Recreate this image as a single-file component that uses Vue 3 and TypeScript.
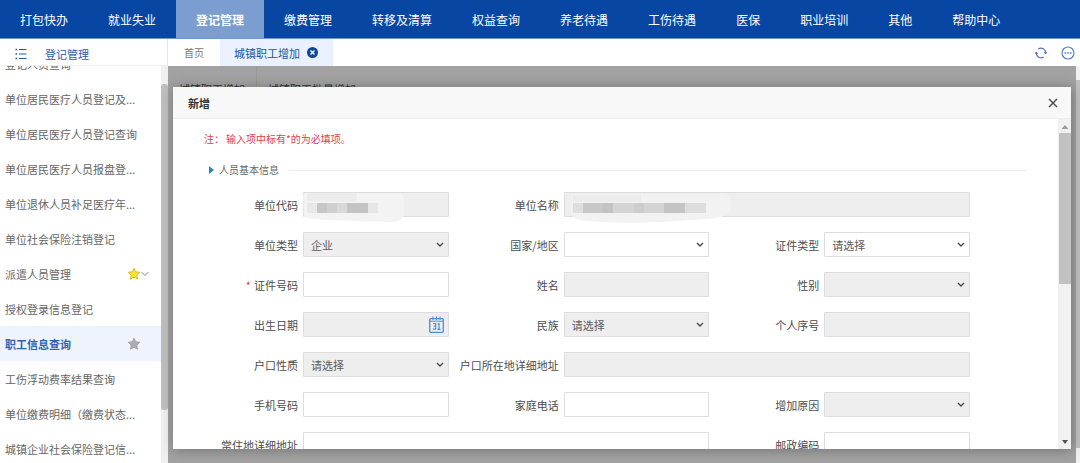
<script setup lang="ts">
import { ref } from 'vue'

interface Field {
  id: string
  label: string
  kind: 'text' | 'select' | 'date'
  value?: string
  disabled?: boolean
  required?: boolean
  wide?: boolean
  mask?: 'code' | 'name'
}

interface MenuItem {
  label: string
  star?: 'gold' | 'grey'
  expandable?: boolean
}

const navItems = ['打包快办', '就业失业', '登记管理', '缴费管理', '转移及清算', '权益查询', '养老待遇', '工伤待遇', '医保', '职业培训', '其他', '帮助中心']
const activeNav = ref('登记管理')

const menuItems: MenuItem[] = [
  { label: '登记人员查询' },
  { label: '单位居民医疗人员登记及...' },
  { label: '单位居民医疗人员登记查询' },
  { label: '单位居民医疗人员报盘登...' },
  { label: '单位退休人员补足医疗年...' },
  { label: '单位社会保险注销登记' },
  { label: '派遣人员管理', star: 'gold', expandable: true },
  { label: '授权登录信息登记' },
  { label: '职工信息查询', star: 'grey' },
  { label: '工伤浮动费率结果查询' },
  { label: '单位缴费明细（缴费状态...' },
  { label: '城镇企业社会保险登记信...' },
]
const activeMenu = ref('职工信息查询')

const fields: Field[] = [
  { id: 'unit-code', label: '单位代码', kind: 'text', disabled: true, mask: 'code' },
  { id: 'unit-name', label: '单位名称', kind: 'text', disabled: true, wide: true, mask: 'name' },
  { id: 'unit-type', label: '单位类型', kind: 'select', value: '企业', disabled: true },
  { id: 'country', label: '国家/地区', kind: 'select' },
  { id: 'id-type', label: '证件类型', kind: 'select', value: '请选择' },
  { id: 'id-number', label: '证件号码', kind: 'text', required: true },
  { id: 'full-name', label: '姓名', kind: 'text', disabled: true },
  { id: 'gender', label: '性别', kind: 'select', disabled: true },
  { id: 'birth-date', label: '出生日期', kind: 'date', disabled: true },
  { id: 'ethnicity', label: '民族', kind: 'select', value: '请选择', disabled: true },
  { id: 'person-no', label: '个人序号', kind: 'text', disabled: true },
  { id: 'household', label: '户口性质', kind: 'select', value: '请选择', disabled: true },
  { id: 'household-address', label: '户口所在地详细地址', kind: 'text', disabled: true, wide: true },
  { id: 'mobile', label: '手机号码', kind: 'text' },
  { id: 'home-phone', label: '家庭电话', kind: 'text' },
  { id: 'reason', label: '增加原因', kind: 'select', disabled: true },
  { id: 'home-address', label: '常住地详细地址', kind: 'text', wide: true },
  { id: 'postcode', label: '邮政编码', kind: 'text' },
]
</script>

<template>
  <div class="page">
    <nav class="topnav">
      <a
        v-for="item in navItems"
        :key="item"
        href="#"
        :class="{ active: item === activeNav }"
        @click.prevent="activeNav = item"
      >{{ item }}</a>
    </nav>

    <div class="shell">
      <aside class="sidebar">
        <header class="side-head">
          <svg width="12" height="12" viewBox="0 0 12 12" fill="none" stroke="#2b549f">
            <path d="M4 1.5h7.5M4 6h7.5M4 10.5h7.5" />
            <path d="M0.5 1.5h1.5M0.5 6h1.5M0.5 10.5h1.5" stroke-width="1.5" />
          </svg>
          <span>登记管理</span>
        </header>
        <div class="side-body">
          <ul class="menu">
            <li v-for="item in menuItems" :key="item.label" :class="{ active: item.label === activeMenu }">
              <a href="#" @click.prevent="activeMenu = item.label">{{ item.label }}</a>
              <svg v-if="item.star" :class="['star', item.star]" width="14" height="14" viewBox="0 0 14 14">
                <path d="M7 1.2l1.7 3.6 4 .5-2.9 2.8.7 4L7 10.2l-3.5 1.9.7-4L1.300 5.300l4-.5z" stroke-linejoin="round" />
              </svg>
              <svg v-if="item.expandable" class="more" width="8" height="6" viewBox="0 0 8 6" fill="none" stroke="#888">
                <path d="M0.500 1l3.500 3.500L7.500 1" />
              </svg>
            </li>
          </ul>
          <div class="side-track"><div class="side-thumb"></div></div>
        </div>
      </aside>

      <main class="content">
        <div class="tabs">
          <a class="tab home" href="#">首页</a>
          <a class="tab current" href="#">
            城镇职工增加
            <svg width="11" height="11" viewBox="0 0 11 11">
              <circle cx="5.500" cy="5.500" r="5.500" fill="#0d4798" />
              <path d="M3.500 3.500l4 4M7.500 3.500l-4 4" stroke="#fff" stroke-width="1.400" />
            </svg>
          </a>
          <div class="tools">
            <button type="button" aria-label="刷新">
              <svg width="12" height="12" viewBox="0 0 12 12" fill="none" stroke="#5470b8" stroke-width="1.200">
                <path d="M3.300 2A4.700 4.700 0 0 1 10.700 6.200M8.700 10A4.700 4.700 0 0 1 1.300 5.800" />
                <path d="M9.200 5.200l1.500 1.800 1.100-1.800M0.200 6.800l1.100-1.800 1.500 1.800" stroke-width="1" />
              </svg>
            </button>
            <button type="button" aria-label="更多">
              <svg width="14" height="14" viewBox="0 0 14 14" fill="none" stroke="#4c82d0" stroke-width="1.200">
                <circle cx="7" cy="7" r="6" />
                <path d="M3.500 7h1.700M6.200 7h1.700M8.900 7h1.700" stroke-width="1.500" />
              </svg>
            </button>
          </div>
        </div>

        <div class="stage">
          <div class="backdrop">
            <div class="under-tabs"><span>城镇职工增加</span><span>城镇职工批量增加</span></div>
          </div>
          <div class="outer-track"><div class="outer-thumb"></div></div>

          <section class="dialog" role="dialog" aria-labelledby="dialog-title">
            <header class="dialog-head">
              <h2 id="dialog-title">新增</h2>
              <button type="button" aria-label="关闭">
                <svg width="10" height="10" viewBox="0 0 10 10" stroke="#505050" stroke-width="1.500">
                  <path d="M1 1l8 8M9 1l-8 8" />
                </svg>
              </button>
            </header>
            <div class="dialog-body">
              <form class="form" @submit.prevent>
                <p class="note"><span>注：</span><span>输入项中标有*的为必填项。</span></p>
                <h3 class="section-title">
                  <svg width="5" height="8" viewBox="0 0 5 8" fill="#2584c8"><path d="M0 0l5 4-5 4z" /></svg>
                  <span>人员基本信息</span>
                </h3>
                <div class="grid">
                  <div v-for="f in fields" :key="f.id" :class="['field', { wide: f.wide }]">
                    <label :for="f.id"><b v-if="f.required">*</b>{{ f.label }}</label>
                    <div class="control">
                      <template v-if="f.kind === 'select'">
                        <select :id="f.id" :disabled="f.disabled">
                          <option>{{ f.value ?? '' }}</option>
                        </select>
                        <svg class="chevron" width="8" height="6" viewBox="0 0 8 6" fill="none" stroke="#4a4a4a" stroke-width="1.400">
                          <path d="M1 1l3 3 3-3" />
                        </svg>
                      </template>
                      <input v-else :id="f.id" type="text" :disabled="f.disabled" />
                      <svg v-if="f.kind === 'date'" class="calendar" width="15" height="17" viewBox="0 0 15 17" fill="none" stroke="#4a90d9">
                        <rect x="0.700" y="2.700" width="13.600" height="13.600" rx="1" stroke-width="1.300" />
                        <path d="M1 5.200h13M4 0.500v3.500M7.500 0.500v3.500M11 0.500v3.500" />
                        <path d="M4 7.500h2.700v2.700H4.700M6.700 10.200v3H3.800M8.700 8.300l1.300-.8v6M8.500 13.300h3" stroke-width="1.200" />
                      </svg>
                      <svg v-if="f.mask === 'code'" class="mask" width="104" height="32" viewBox="0 0 104 32">
                        <path d="M0 3Q2 0 8 1L98 1Q103 8 100 25Q98 30 86 30L28 28Q5 27 1 25Z" fill="#f3f3f3" />
                        <rect x="4" y="1" width="50" height="8" fill="#ececec" />
                        <rect x="4" y="11" width="10" height="10" fill="#e8e8e8" />
                        <rect x="14" y="11" width="51" height="10" fill="#cfcfcf" />
                        <rect x="14" y="11" width="10" height="10" fill="#c6c6c6" />
                        <rect x="34" y="11" width="10" height="10" fill="#d9d9d9" />
                        <rect x="44" y="11" width="21" height="10" fill="#c4c4c4" />
                        <rect x="65" y="11" width="10" height="10" fill="#e6e6e6" />
                      </svg>
                      <svg v-if="f.mask === 'name'" class="mask" width="168" height="32" viewBox="0 0 168 32">
                        <path d="M8 2L162 2Q170 10 164 22Q158 27 125 28Q70 33 22 29Q10 28 7 22Z" fill="#f2f2f2" />
                        <rect x="9" y="3" width="68" height="7" fill="#ececec" />
                        <rect x="9" y="11" width="133" height="10" fill="#d4d4d4" />
                        <rect x="9" y="11" width="10" height="10" fill="#dedede" />
                        <rect x="19" y="11" width="20" height="10" fill="#c8c8c8" />
                        <rect x="39" y="11" width="10" height="10" fill="#c3c3c3" />
                        <rect x="70" y="11" width="10" height="10" fill="#cdcdcd" />
                        <rect x="100" y="11" width="21" height="10" fill="#c5c5c5" />
                        <rect x="121" y="11" width="21" height="10" fill="#dddddd" />
                      </svg>
                    </div>
                  </div>
                </div>
              </form>
              <div class="dialog-track">
                <svg width="8" height="5" viewBox="0 0 8 5" fill="#9a9a9a"><path d="M0.500 5L4 1l3.500 4z" /></svg>
                <div class="dialog-thumb"></div>
                <svg width="8" height="5" viewBox="0 0 8 5" fill="#505050"><path d="M1 0h6L4 4z" /></svg>
              </div>
            </div>
          </section>
        </div>
      </main>
    </div>
  </div>
</template>

<style>
body {
  margin: 0;
  overflow: hidden;
}
</style>

<style scoped>
.page {
  display: flex;
  flex-direction: column;
  height: 100vh;
  overflow: hidden;
  background: #fff;
  color: #666;
  font-family: "Noto Sans CJK SC", sans-serif;
  font-size: 11px;
}
a {
  color: inherit;
  text-decoration: none;
}
button {
  display: flex;
  padding: 0;
  border: 0;
  background: none;
}
.topnav {
  display: flex;
  flex: none;
  height: 38px;
  border-bottom: 1px solid #6f97cf;
  background: #0747a3;
  color: #fff;
  font-size: 12px;
  line-height: 40px;
}
.topnav a {
  padding: 0 20px;
  white-space: nowrap;
}
.topnav a.active {
  background: #7b9dd0;
  font-weight: 700;
}
.shell {
  display: flex;
  flex: 1;
  min-height: 0;
}
.sidebar {
  display: flex;
  flex: none;
  flex-direction: column;
  width: 168px;
}
.side-head {
  display: flex;
  flex: none;
  align-items: center;
  gap: 18px;
  box-sizing: border-box;
  height: 27px;
  padding: 4px 0 0 15px;
  border-right: 1px solid #e4e8ee;
  border-bottom: 1px solid #eee;
  color: #2b5ba8;
}
.side-body {
  display: flex;
  flex: 1;
  min-height: 0;
  overflow: hidden;
}
.menu {
  flex: 1;
  min-width: 0;
  margin: -20px 0 0;
  padding: 0;
  list-style: none;
}
.menu li {
  display: flex;
  align-items: center;
  box-sizing: border-box;
  height: 35px;
  padding: 0 12px 0 5px;
  line-height: 16px;
  white-space: nowrap;
}
.menu a {
  flex: 0 0 122px;
}
.menu li.active {
  background: #eef3fd;
  color: #2f62b5;
  font-weight: 700;
}
.star.gold {
  fill: #f7e436;
  stroke: #dcbb27;
}
.star.grey {
  fill: #aaadb3;
  stroke: #a0a3a9;
}
.side-track {
  flex: none;
  width: 7px;
  padding-top: 18px;
  background: #f0f0f0;
}
.side-thumb {
  height: 86%;
  border-radius: 3px;
  background: #bfbfbf;
}
.content {
  display: flex;
  flex: 1;
  flex-direction: column;
  min-width: 0;
}
.tabs {
  display: flex;
  flex: none;
  height: 27px;
  line-height: 26px;
}
.tab {
  display: flex;
  align-items: center;
}
.home {
  padding: 0 16px;
  color: #777;
  font-size: 10px;
}
.current {
  gap: 7px;
  padding: 0 15px 0 14px;
  background: #eaf0fd;
  color: #23529f;
}
.tools {
  display: flex;
  align-items: center;
  gap: 14px;
  margin-left: auto;
  padding-right: 5px;
}
.stage {
  position: relative;
  display: flex;
  flex: 1;
  min-height: 0;
}
.backdrop {
  flex: 1;
  overflow: hidden;
  background: #a2a2a2;
}
.under-tabs {
  display: flex;
  height: 46px;
  color: #333;
  line-height: 46px;
}
.under-tabs span {
  padding: 0 11px;
}
.under-tabs span:first-child {
  border-right: 1px solid #989898;
}
.outer-track {
  flex: none;
  width: 4px;
  box-sizing: border-box;
  padding: 14px 0 15px;
  background: #f1f1f1;
}
.outer-thumb {
  height: 100%;
  background: #c1c1c1;
}
.dialog {
  position: absolute;
  inset: 21px 9px 14px 5px;
  display: flex;
  flex-direction: column;
  background: #fff;
  box-shadow: 1px 1px 12px rgba(0, 0, 0, 0.3);
}
.dialog-head {
  display: flex;
  flex: none;
  align-items: center;
  justify-content: space-between;
  height: 31px;
  padding: 0 13px 0 15px;
  border-bottom: 1px solid #eee;
  background: #f8f8f8;
}
.dialog-head h2 {
  margin: 0;
  color: #333;
  font-size: 11px;
  font-weight: 700;
}
.dialog-body {
  display: flex;
  flex: 1;
  min-height: 0;
  overflow: hidden;
}
.form {
  flex: 1;
  min-width: 0;
  padding: 12px 88px 0 15px;
}
.note {
  display: flex;
  gap: 2px;
  margin: 0 0 0 16px;
  color: #d9434e;
  font-size: 10px;
  line-height: 16px;
}
.section-title {
  display: flex;
  align-items: center;
  gap: 5px;
  margin: 15px -57px 14px 21px;
  color: #666;
  font-size: 10px;
  font-weight: 400;
  line-height: 16px;
}
.section-title::after {
  flex: 1;
  height: 1px;
  margin-left: 5px;
  background: #eee;
  content: "";
}
.grid {
  display: grid;
  grid-template-columns: repeat(3, minmax(0, 1fr));
  row-gap: 15px;
}
.field {
  display: flex;
  align-items: center;
  gap: 5px;
  min-width: 0;
}
.field.wide {
  grid-column: span 2;
}
.field label {
  flex: 0 0 110px;
  color: #4c4c4c;
  line-height: 24px;
  text-align: right;
  white-space: nowrap;
}
.field label b {
  margin-right: 3px;
  color: #d9434e;
  font-weight: 400;
}
.control {
  position: relative;
  flex: 1;
  min-width: 0;
}
.control input,
.control select {
  display: block;
  box-sizing: border-box;
  width: 100%;
  height: 25px;
  margin: 0;
  padding: 0 7px;
  border: 1px solid #dcdcdc;
  border-radius: 1px;
  appearance: none;
  background: #fff;
  color: #5c5c5c;
  font: inherit;
  opacity: 1;
}
.control input:disabled,
.control select:disabled {
  background: #eee;
}
.chevron {
  position: absolute;
  top: 10px;
  right: 5px;
  pointer-events: none;
}
.calendar {
  position: absolute;
  top: 4px;
  right: 5px;
}
.mask {
  position: absolute;
  top: 0;
  left: 0;
}
.dialog-track {
  display: flex;
  flex: none;
  flex-direction: column;
  align-items: center;
  width: 13px;
  padding: 5px 0 4px;
  background: #f1f1f1;
}
.dialog-thumb {
  width: 12px;
  height: 47%;
  margin: 4px 0 auto;
  background: #c1c1c1;
}
</style>
